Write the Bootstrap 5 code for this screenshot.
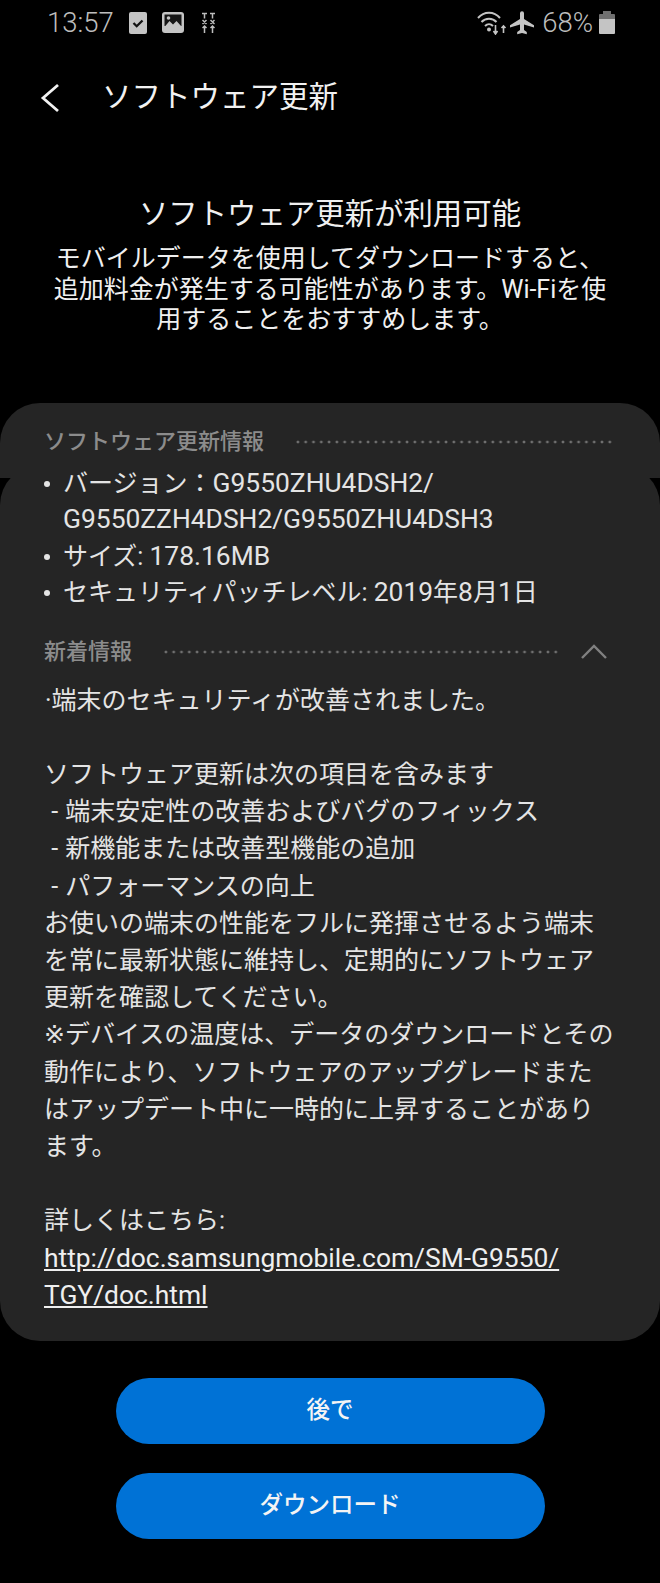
<!DOCTYPE html>
<html lang="ja">
<head>
<meta charset="utf-8">
<title>ソフトウェア更新</title>
<link href="https://cdn.jsdelivr.net/npm/bootstrap@5.3.0/dist/css/bootstrap.min.css" rel="stylesheet">
<style>
html,body{margin:0;background:#000;font-family:"Roboto","Noto Sans CJK JP",sans-serif;}
.screen{width:660px;height:1583px;background:#000;color:#e4e4e4;overflow:hidden;}
.statusbar{height:45px;padding:0 45px 0 47px;color:#bdbdbd;font-size:27.5px;font-weight:300;}
.clock{width:65px;line-height:1;margin-right:17px;}
.ico-a{margin-right:15px;}
.ico-b{margin-right:18px;}
.ico-p{margin-left:1px;}
.pct{margin:0 6px 0 8px;line-height:1;}
.apphead{height:70px;margin-top:18px;padding-left:40px;color:#f2f2f2;font-size:29.5px;}
.apptitle{margin-left:42px;line-height:1;}
.intro{margin-top:61px;height:209px;color:#f0f0f0;text-align:center;padding:0 49px;}
.intro h1{font-size:29.4px;font-weight:400;margin:0 0 10px;line-height:40px;}
.intro p{font-size:25px;line-height:30.5px;margin:0;}
.panelwrap{position:relative;height:938px;}
.panelback{position:absolute;left:0;right:0;top:0;height:75px;background:#252525;border-radius:40px 40px 0 0;}
.panelfront{position:absolute;left:0;right:0;top:62px;bottom:0;background:#252525;border-radius:40px;}
.panelbody{position:relative;padding:21px 44px 0 44px;font-size:25px;line-height:36.4px;}
.sechead{color:#8c8c8c;font-size:22px;font-weight:500;height:36px;line-height:36px;margin-right:4px;}
.dots{flex:1;height:4px;margin-left:30px;background:radial-gradient(circle,#707070 1.2px,transparent 1.7px) left center/7.8px 4px repeat-x;}
.bul{margin:6px 0 0;padding:0;list-style:none;}
.bul li{padding-left:19px;position:relative;}
.bul li::before{content:"";position:absolute;left:0;top:15px;width:6px;height:6px;border-radius:50%;background:#e4e4e4;}
.lat{font-size:26.4px;line-height:1;}
.chev{margin:0 5px 0 20px;}
.head2{margin-top:22px;}
.note{margin:12px 0 0;line-height:37.2px;}
.nblock{white-space:pre-wrap;word-spacing:1px;}
.firstline{text-indent:1px;}
.kline{font-family:"DejaVu Sans","Noto Sans CJK JP",sans-serif;}
.linkblock{margin-top:37.2px;}
.nblock a{color:#efefef;text-decoration:underline;}
.actbtn{display:block;width:429px;height:66px;border-radius:33px;background:#0072d6;border:0;color:#f4f4f4;font-size:23.5px;font-weight:500;margin:0 auto 29px;padding:0;}
.actbtn:hover{background:#0072d6;color:#f4f4f4;}
.actions{padding-top:37px;}
</style>
</head>
<body>
<div class="screen">
  <div class="statusbar d-flex align-items-center">
    <span class="clock">13:57</span>
    <svg class="ico-a" width="18" height="22" viewBox="0 0 18 22"><rect width="18" height="22" rx="2" fill="#c4c4c4"/><path d="M4.500 11l3.200 3.200L13.500 8.500" fill="none" stroke="#111" stroke-width="2.300"/></svg>
    <svg class="ico-b" width="22" height="21" viewBox="0 0 22 21"><rect width="22" height="21" rx="3" fill="#c4c4c4"/><rect x="2.500" y="2.500" width="17" height="11.500" fill="#161616"/><path d="M2.500 15l5-6 3.500 3.500 3.500-3.500 5 5.500V16h-17z" fill="#c4c4c4"/><circle cx="6.500" cy="6" r="1.800" fill="#c4c4c4"/></svg>
    <svg width="13" height="21" viewBox="0 0 13 21" fill="none" stroke="#bdbdbd" stroke-width="1.500"><path d="M0 1.500h5M2.500 1.500v5M8 1.500h5M10.500 1.500v5M.5 8l4 4M4.500 8l-4 4M8.500 8l4 4M12.500 8l-4 4M2.500 14v7M.5 16l2-2 2 2M10.500 14v7M8.500 16l2-2 2 2"/></svg>
    <span class="flex-grow-1"></span>
    <svg width="32" height="24" viewBox="0 0 32 24" fill="none" stroke="#c4c4c4" stroke-width="2"><path d="M1 7C7 0 17 0 23 7M4.500 11c4-4.500 11-4.500 15 0M8 15c2.500-2.500 5.500-2.500 8 0"/><circle cx="12" cy="18.500" r="2" fill="#c4c4c4" stroke="none"/><path d="M18.500 14v9M16.500 20l2 3 2-3M26.500 22v-7M24.500 17l2-2 2 2" stroke-width="1.600"/></svg>
    <svg class="ico-p" width="24" height="24" viewBox="0 0 24 24" fill="#c4c4c4"><path d="M24 16.500v-2.200l-10-6.300V2.300a2 2 0 0 0-4 0V8L0 14.300v2.200l10-3V19l-2.800 2v2.200l4.800-1.300 4.800 1.300V21L14 19v-5.500z"/></svg>
    <span class="pct">68%</span>
    <svg width="16" height="23" viewBox="0 0 16 23"><path d="M4 0h8v3H4z" fill="#707070"/><path d="M0 4a1 1 0 0 1 1-1h14a1 1 0 0 1 1 1v4H0z" fill="#707070"/><path d="M0 8h16v14a1 1 0 0 1-1 1H1a1 1 0 0 1-1-1z" fill="#c4c4c4"/></svg>
  </div>
  <div class="apphead d-flex align-items-center">
    <svg width="20" height="30" viewBox="0 0 20 30" fill="none" stroke="#f2f2f2" stroke-width="2.800"><path d="M18 2L3 15l15 13"/></svg>
    <span class="apptitle">ソフトウェア更新</span>
  </div>
  <div class="intro">
    <h1>ソフトウェア更新が利用可能</h1>
    <p>モバイルデータを使用してダウンロードすると、追加料金が発生する可能性があります。Wi-Fiを使用することをおすすめします。</p>
  </div>
  <div class="panelwrap">
    <div class="panelfront"></div>
    <div class="panelback"></div>
    <div class="panelbody">
      <div class="sechead d-flex align-items-center"><span>ソフトウェア更新情報</span><span class="dots"></span></div>
      <ul class="bul">
        <li>バージョン：<span class="lat">G9550ZHU4DSH2/</span><br><span class="lat">G9550ZZH4DSH2/G9550ZHU4DSH3</span></li>
        <li>サイズ: <span class="lat">178.16MB</span></li>
        <li>セキュリティパッチレベル: <span class="lat">2019</span>年<span class="lat">8</span>月<span class="lat">1</span>日</li>
      </ul>
      <div class="sechead head2 d-flex align-items-center">
        <span>新着情報</span><span class="dots"></span>
        <svg class="chev" width="26" height="15" viewBox="0 0 26 15" fill="none" stroke="#808080" stroke-width="2.400"><path d="M1 14L13 2l12 12"/></svg>
      </div>
      <div class="note">
        <div class="nblock firstline">·端末のセキュリティが改善されました。

ソフトウェア更新は次の項目を含みます
 - 端末安定性の改善およびバグのフィックス
 - 新機能または改善型機能の追加
 - パフォーマンスの向上
お使いの端末の性能をフルに発揮させるよう端末を常に最新状態に維持し、定期的にソフトウェア更新を確認してください。</div>
        <div class="kline">※デバイスの温度は、データのダウンロードとその動作により、ソフトウェアのアップグレードまたはアップデート中に一時的に上昇することがあります。</div>
        <div class="nblock linkblock">詳しくはこちら:
<a href="#" class="lat">http://doc.samsungmobile.com/SM-G9550/<br>TGY/doc.html</a></div>
      </div>
    </div>
  </div>
  <div class="actions">
    <button class="actbtn btn" type="button">後で</button>
    <button class="actbtn btn" type="button">ダウンロード</button>
  </div>
</div>
<script src="https://cdn.jsdelivr.net/npm/bootstrap@5.3.0/dist/js/bootstrap.bundle.min.js"></script>
</body>
</html>
